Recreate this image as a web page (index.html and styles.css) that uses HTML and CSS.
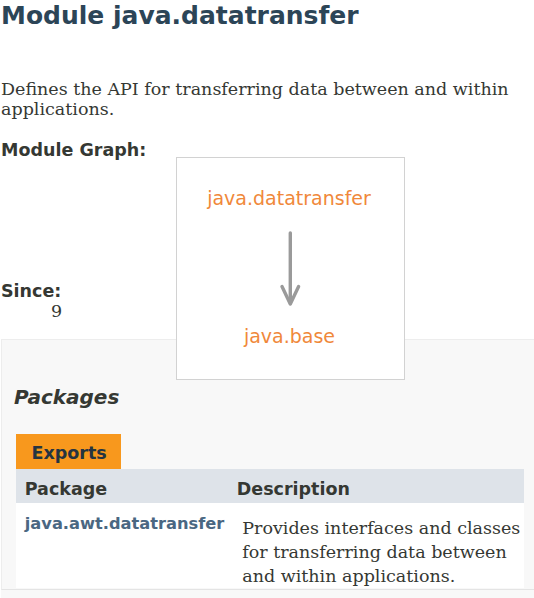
FILE: index.html
```html
<!DOCTYPE html>
<html lang="en">
<head>
<meta charset="utf-8">
<title>Module java.datatransfer</title>
<link rel="stylesheet" href="styles.css">
</head>
<body>
<main class="page">
  <h1 class="title">Module java.datatransfer</h1>
  <div class="block">Defines the API for transferring data between and within applications.</div>
  <dl class="notes">
    <dt class="graph-label">Module Graph:</dt>
    <dd class="graph-dd">
      <figure class="graph">
        <svg width="227" height="221" viewBox="0 0 227 221" xmlns="http://www.w3.org/2000/svg">
          <text x="112" y="47" text-anchor="middle" class="node">java.datatransfer</text>
          <line x1="113.3" y1="75" x2="113.3" y2="145" class="edge"/>
          <polyline points="105,128.5 113.3,146 121.6,128.5" class="edge head"/>
          <text x="112.5" y="185" text-anchor="middle" class="node">java.base</text>
        </svg>
      </figure>
    </dd>
    <dt class="since-label">Since:</dt>
    <dd class="since">9</dd>
  </dl>
  <section class="summary">
    <h3 class="summary-title">Packages</h3>
    <div class="tab">Exports</div>
    <table class="pkg-table">
      <colgroup>
        <col class="c1">
        <col class="c2">
      </colgroup>
      <thead>
        <tr>
          <th class="col-first">Package</th>
          <th class="col-last">Description</th>
        </tr>
      </thead>
      <tbody>
        <tr>
          <th class="col-first"><a class="pkg-link" href="#">java.awt.datatransfer</a></th>
          <td class="col-last">Provides interfaces and classes for transferring data between and within applications.</td>
        </tr>
      </tbody>
    </table>
  </section>
  <div class="next"></div>
</main>
</body>
</html>
```
FILE: styles.css
```css
html, body {
  margin: 0;
  padding: 0;
  background: #ffffff;
}

body {
  font-family: "DejaVu Serif", "Liberation Serif", serif;
  font-size: 17.5px;
  color: #353833;
  overflow: hidden;
}

.page {
  position: relative;
  padding-left: 1px;
}

.title {
  margin: 0;
  padding-top: 2.4px;
  font-family: "DejaVu Sans", sans-serif;
  font-size: 25px;
  line-height: 28px;
  font-weight: bold;
  color: #2c4557;
}

.block {
  margin-top: 48.5px;
  line-height: 20px;
  width: 525px;
}

.notes {
  margin: 20.9px 0 0 0;
}

.notes dt {
  font-family: "DejaVu Sans", sans-serif;
  font-weight: bold;
  font-size: 17.5px;
  line-height: 20px;
  color: #353833;
}

.graph-dd {
  margin: 0;
  height: 121.4px;
}

.graph {
  position: absolute;
  left: 176px;
  top: 157px;
  margin: 0;
  background: #ffffff;
  border: 1px solid #d2d2d2;
  width: 227px;
  height: 221px;
  z-index: 2;
}

.graph svg {
  display: block;
}

.node {
  font-family: "DejaVu Sans", sans-serif;
  font-size: 19px;
  fill: #f0883a;
}

.edge {
  stroke: #9a9a9a;
  stroke-width: 3.4;
  fill: none;
  stroke-linecap: round;
}

.head {
  stroke-linejoin: round;
}

.since {
  margin: 0 0 0 50px;
  line-height: 20px;
}

.summary {
  margin-top: 17.75px;
  margin-right: -20px;
  background: #f8f8f8;
  border: 1px solid #ededed;
  border-bottom-color: #e4e4e4;
  padding: 46.1px 0 1px 12px;
}

.summary-title {
  margin: 0;
  font-family: "DejaVu Sans", sans-serif;
  font-size: 20px;
  line-height: 23px;
  font-style: italic;
  font-weight: bold;
  color: #353833;
}

.tab {
  margin: 24.9px 0 0 2px;
  display: inline-block;
  background: #f8981d;
  color: #253441;
  font-family: "DejaVu Sans", sans-serif;
  font-weight: bold;
  font-size: 17.5px;
  line-height: 20px;
  padding: 9.25px 14px 5.75px 15.5px;
  vertical-align: top;
}

.pkg-table {
  margin-left: 2px;
  width: 508px;
  table-layout: fixed;
  border-collapse: collapse;
  border-spacing: 0;
  background: #ffffff;
}

.c1 {
  width: 212px;
}

.c2 {
  width: 296px;
}

.pkg-table thead th {
  background: #dee3e9;
  text-align: left;
  font-family: "DejaVu Sans", sans-serif;
  font-weight: bold;
  font-size: 17.5px;
  line-height: 20px;
  color: #353833;
  padding: 9.95px 3px 4.35px 8.75px;
}

.pkg-table tbody th {
  text-align: left;
  vertical-align: top;
  font-family: "DejaVu Sans", sans-serif;
  font-weight: bold;
  font-size: 16.25px;
  line-height: 20px;
  padding: 10.4px 3px 0 8.75px;
}

.pkg-link {
  color: #4a6782;
  text-decoration: none;
}

.pkg-table tbody td {
  vertical-align: top;
  line-height: 23.85px;
  padding: 13.7px 3px 0 14.25px;
}

.next {
  height: 12px;
  background: #f8f8f8;
}
```
